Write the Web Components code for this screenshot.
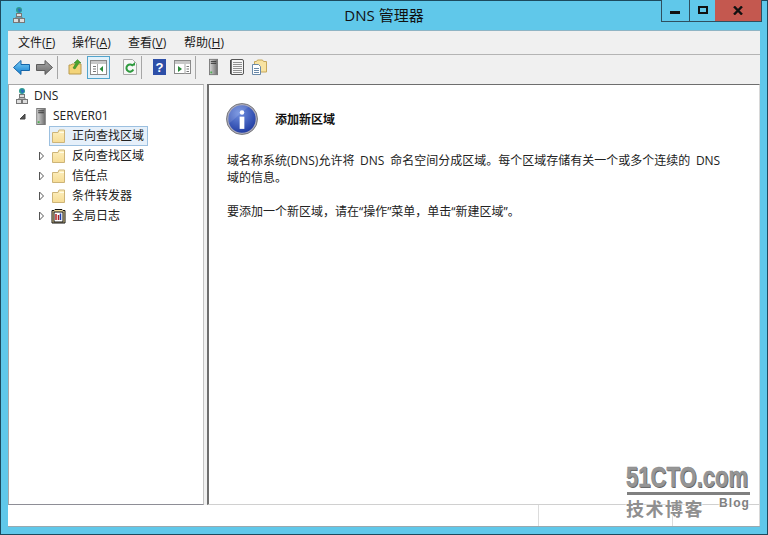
<!DOCTYPE html>
<html lang="zh-CN"><head><meta charset="utf-8"><title>DNS 管理器</title>
<style>
html,body{margin:0;height:100%;overflow:hidden}
body{font:12px "Open Sans","Noto Sans CJK SC",sans-serif;color:#1a1a1a}
</style></head><body>
<win-frame>
  <title-bar slot="title">DNS 管理器</title-bar>
  <menu-bar slot="menu"><span>文件(<u>F</u>)</span><span>操作(<u>A</u>)</span><span>查看(<u>V</u>)</span><span>帮助(<u>H</u>)</span></menu-bar>
  <tool-bar slot="tools"></tool-bar>
  <tree-pane slot="tree">
    <tree-row level="0" icon="dns">DNS</tree-row>
    <tree-row level="1" icon="server" twist="open">SERVER01</tree-row>
    <tree-row level="2" icon="folder" selected>正向查找区域</tree-row>
    <tree-row level="2" icon="folder" twist="closed">反向查找区域</tree-row>
    <tree-row level="2" icon="folder" twist="closed">信任点</tree-row>
    <tree-row level="2" icon="folder" twist="closed">条件转发器</tree-row>
    <tree-row level="2" icon="log" twist="closed">全局日志</tree-row>
  </tree-pane>
  <detail-pane slot="detail" heading="添加新区域">
    <p>域名称系统(DNS)允许将 DNS 命名空间分成区域。每个区域存储有关一个或多个连续的 DNS<br>域的信息。</p>
    <p>要添加一个新区域，请在“操作”菜单，单击“新建区域”。</p>
  </detail-pane>
  <status-bar slot="status"></status-bar>
  <blog-mark slot="mark"></blog-mark>
</win-frame>
<script>
const DEFS=`<svg width="0" height="0" style="position:absolute"><defs>
<linearGradient id="fold" x1="0" y1="0" x2="0" y2="1"><stop offset="0" stop-color="#fdf0c0"/><stop offset="1" stop-color="#f6dc95"/></linearGradient>
<linearGradient id="arrB" x1="0" y1="0" x2="0" y2="1"><stop offset="0" stop-color="#7fd0f5"/><stop offset="1" stop-color="#0f7ccf"/></linearGradient>
<linearGradient id="arrG" x1="0" y1="0" x2="0" y2="1"><stop offset="0" stop-color="#a8a8a8"/><stop offset="1" stop-color="#6a6a6a"/></linearGradient>
<linearGradient id="srv" x1="0" y1="0" x2="1" y2="0"><stop offset="0" stop-color="#d8d8d8"/><stop offset="1" stop-color="#6d6d6d"/></linearGradient>
<radialGradient id="info" cx=".4" cy=".3" r=".8"><stop offset="0" stop-color="#6f8fe0"/><stop offset="1" stop-color="#16319a"/></radialGradient>
<symbol id="folder" viewBox="0 0 16 16"><path d="M2.500 14.500V4.500h5.500l1-2.500h5.500v12.500z" fill="url(#fold)" stroke="#cdb478"/><path d="M9.500 4.500h4.500" stroke="#fffbe6"/></symbol>
<symbol id="dns" viewBox="0 0 12 16"><circle cx="6" cy="3" r="3" fill="#2f9d8f"/><path d="M4.500 1.500h2.500l1.500 2-2.500 2z" fill="#2a6fc0"/><path d="M6 6v1M3 11.500V10h6v1.500" fill="none" stroke="#777"/><rect x="3.500" y="6.500" width="5" height="3" fill="#ddd" stroke="#777"/><rect x=".5" y="11.500" width="5" height="4" fill="#ddd" stroke="#777"/><rect x="6.500" y="11.500" width="5" height="4" fill="#ddd" stroke="#777"/></symbol>
<symbol id="server" viewBox="0 0 10 18"><rect x=".5" y=".5" width="9" height="17" fill="url(#srv)" stroke="#777"/><path d="M2 3h6M2 5h6" stroke="#333"/><rect x="1.500" y="14" width="2" height="2" fill="#4caf50"/></symbol>
</defs></svg>`;
const def=(name,html,init)=>customElements.define(name,class extends HTMLElement{
  constructor(){super();this.attachShadow({mode:'open'}).innerHTML=DEFS+html}
  connectedCallback(){init&&init.call(this)}
});
def('win-frame',`<style>
:host{display:flex;flex-direction:column;box-sizing:border-box;width:768px;height:535px;position:relative;background:#60c8ea;border:1px solid #1c4a5e;padding:0 7px 7px 7px}
.main{flex:none;display:flex;flex-direction:column;box-sizing:border-box;height:497px;background:#f0f0f0;border-top:1px solid #8fb4c4;border-bottom:1px solid #98a9b0}
.panes{flex:none;display:flex;height:421px;gap:3px}
</style>
<slot name="title"></slot>
<div class="main"><slot name="menu"></slot><slot name="tools"></slot>
<div class="panes"><slot name="tree"></slot><slot name="detail"></slot></div>
<slot name="status"></slot></div><slot name="mark"></slot>`);
def('title-bar',`<style>
:host{display:flex;flex:none;height:29px;align-items:center;justify-content:center;position:relative;font-size:15px;color:#111}
.ic{position:absolute;left:5px;top:6px;width:12px;height:16px}
.t{margin-bottom:2px}
.btns{position:absolute;right:-2px;top:-1px;display:flex;height:22px;box-sizing:border-box;border:1px solid #2f4f5f;border-top:0;background:#60c8ea}
.b{width:27px;display:flex;align-items:center;justify-content:center;box-sizing:border-box;border-left:1px solid #2f4f5f}
.b:first-child{border-left:0}
.x{width:46px;background:#c4584f;border-left:0}
svg{display:block}
</style>
<svg class="ic"><use href="#dns"/></svg><span class="t"><slot></slot></span>
<div class="btns">
<div class="b"><svg width="11" height="10"><rect x="0" y="5" width="10" height="3" fill="#111"/></svg></div>
<div class="b" style="width:26px"><svg width="10" height="9"><rect x="1" y="1" width="8" height="6" fill="none" stroke="#111" stroke-width="2"/></svg></div>
<div class="b x"><svg width="10" height="9" viewBox="0 0 10 9"><path d="M1 .5 9 8.500M9 .5 1 8.500" stroke="#111" stroke-width="2.400"/></svg></div>
</div>`);
def('menu-bar',`<style>
:host{display:flex;flex:none;height:22px;padding:1px 0 0 10px;align-items:center;gap:17px;border-bottom:1px solid #b4b4b4;background:#f0f0f0;font-size:12px;line-height:22px}
::slotted(span){width:39px;white-space:nowrap}
::slotted(span:first-child){margin-right:-2px}
</style><slot></slot>`);
const ti={
back:`<svg width="17" height="15" viewBox="0 0 17 15"><path d="M.5 7.500 8 .5v4h8.500v6H8v4z" fill="url(#arrB)" stroke="#1565a8"/></svg>`,
fwd:`<svg width="17" height="15" viewBox="0 0 17 15"><path d="M16.500 7.500 9 .5v4H.5v6H9v4z" fill="url(#arrG)" stroke="#5c5c5c"/></svg>`,
up:`<svg width="16" height="16" viewBox="0 0 16 16"><path d="M1 15V6h2l1-1h9v10z" fill="#f3d479" stroke="#b99a4e"/><path d="M5 9 8 4H6l3.500-3.500L13 4h-2L7 10z" fill="#4aa52e" stroke="#2d7a1c" stroke-width=".5"/></svg>`,
tree:`<svg width="17" height="15" viewBox="0 0 17 15"><rect x=".5" y=".5" width="16" height="14" fill="#fff" stroke="#8a8a8a"/><rect x="1" y="1" width="15" height="3" fill="#c8c8c8"/><path d="M3 6h3v1H3zM3 8.500h3v1H3zM3 11h3v1H3z" fill="#777"/><path d="M7.500 4v10" stroke="#aaa"/><path d="M13 6v6L9.500 9z" fill="#2a8a3a"/></svg>`,
refresh:`<svg width="14" height="16" viewBox="0 0 14 16"><path d="M.5.5h9l4 4v11H.5z" fill="#f7f7f7" stroke="#aaa"/><path d="M10 7a3.600 3.600 0 1 0 .3 3.500" fill="none" stroke="#2e9a3e" stroke-width="2"/><path d="M8 6.500h4V3z" fill="#2e9a3e"/></svg>`,
help:`<svg width="13" height="16" viewBox="0 0 13 16"><rect width="13" height="16" fill="#2d4fa8"/><text x="6.500" y="13" text-anchor="middle" font-family="Liberation Sans" font-weight="700" font-size="13" fill="#fff">?</text></svg>`,
panel:`<svg width="17" height="14" viewBox="0 0 17 14"><rect x=".5" y=".5" width="16" height="13" fill="#fff" stroke="#8a8a8a"/><rect x="1" y="1" width="15" height="3" fill="#c8c8c8"/><path d="M11 4v10" stroke="#aaa"/><path d="M12.500 6h2.500v1h-2.500zM12.500 8.500h2.500v1h-2.500zM12.500 11h2.500v1h-2.500z" fill="#777"/><path d="M4 6v6l4-3z" fill="#2a8a3a"/></svg>`,
server:`<svg width="9" height="18"><use href="#server"/></svg>`,
list:`<svg width="14" height="16" viewBox="0 0 14 16"><rect x=".5" y=".5" width="13" height="15" rx="1.500" fill="#f6f6f6" stroke="#555"/><path d="M1 1v14" stroke="#444" stroke-width="1.500"/><path d="M3 3.500h9M3 5.500h9M3 7.500h9M3 9.500h9M3 11.500h9M3 13.500h9" stroke="#777" stroke-width=".8"/></svg>`,
exp:`<svg width="15" height="16" viewBox="0 0 15 16"><path d="M2.500 13V2.500h2l1-1.500h5l1 1.500h3V13z" fill="#f8e3a1" stroke="#c6a75a"/><path d="M.5 5.500h6l2 2v8h-8z" fill="#fff" stroke="#6a89a8"/><path d="M2 9.500h5M2 11.500h5M2 13.500h5" stroke="#6a89a8"/></svg>`};
def('tool-bar',`<style>
:host{display:flex;flex:none;height:29px;align-items:center;padding:0 0 5px 2px;background:#f0f0f0;box-sizing:border-box}
.b{flex:none;width:23px;height:23px;display:flex;align-items:center;justify-content:center;box-sizing:border-box}
.a{background:#e2f1fa;border:1px solid #52a4cc}
.s{flex:none;width:1px;height:23px;background:#a6a6a6;margin:0 6px 0 1px}
svg{display:block}
</style>
<div class="b">${ti.back}</div><div class="b">${ti.fwd}</div><div class="s"></div>
<div class="b">${ti.up}</div><div class="b a">${ti.tree}</div><div class="b" style="margin-left:8px">${ti.refresh}</div><div class="s" style="margin-left:0"></div>
<div class="b">${ti.help}</div><div class="b">${ti.panel}</div><div class="s"></div>
<div class="b">${ti.server}</div><div class="b">${ti.list}</div><div class="b">${ti.exp}</div>`);
def('tree-pane',`<style>
:host{display:block;flex:none;width:196px;height:421px;box-sizing:border-box;background:#fff;border:1px solid #a8a8a8;border-right-color:#c4c4c4;border-bottom-color:#8e8e96;padding-top:1px}
</style><slot></slot>`);
def('tree-row',`<style>
:host{display:flex;height:20px;align-items:center;white-space:nowrap;box-sizing:border-box;color:#222}
.tw{flex:none;width:11px;height:10px;display:flex;align-items:center;justify-content:flex-start}
.ic{flex:none;width:16px;height:16px;display:flex;align-items:center;justify-content:center}
.lb{line-height:18px;padding:0 3px 0 6px}
.wrap{display:flex;align-items:center;height:20px;box-sizing:border-box;border:1px solid transparent}
:host([selected]) .wrap{border-color:#9cc0e0;background:#e6f0fa}
svg{display:block}
</style>
<div id="ind" style="flex:none"></div><div class="tw" id="tw"></div><div class="wrap" id="w"><div class="ic" id="ic"></div><span class="lb"><slot></slot></span></div>`,
function(){
 const s=this.shadowRoot,l=+this.getAttribute('level'),ic=this.getAttribute('icon'),tw=this.getAttribute('twist');
 s.getElementById('ind').style.width=[2,10,29][l]+'px';
 const t=s.getElementById('tw');
 t.style.visibility=tw?'visible':'hidden';
 if(l===0)t.style.width='0';
 if(tw==='closed')t.innerHTML='<svg width="7" height="10"><path d="M1.500 1 5.500 5 1.500 9z" fill="#fff" stroke="#555"/></svg>';
 if(tw==='open')t.innerHTML='<svg width="7" height="7"><path d="M6 1V6H1z" fill="#555" stroke="#444"/></svg>';
 s.getElementById('ic').innerHTML={
  dns:'<svg width="12" height="16" style="margin-left:3px"><use href="#dns"/></svg>',
  server:'<svg width="10" height="17" style="margin-left:4px"><use href="#server"/></svg>',
  folder:'<svg width="16" height="16"><use href="#folder"/></svg>',
  log:'<svg width="15" height="15" viewBox="0 0 15 15"><path d="M1 14V1.500h2l1-1h7l1 1h2V14z" fill="#f3df9f" stroke="#111"/><rect x="3" y="3" width="9" height="10" fill="#fff" stroke="#111"/><path d="M5 5v6M7.500 6v5" stroke="#b02020" stroke-width="1.500"/><path d="M9.500 4.500v6.500" stroke="#2040b0" stroke-width="1.500"/></svg>'}[ic];
});
def('detail-pane',`<style>
:host{display:block;flex:none;width:553px;height:421px;box-sizing:border-box;background:#fff;border-left:2px solid #6e6e6e;border-top:1px solid #6e6e6e;border-bottom:1px solid #d0d0d0;border-right:1px solid #d8d8d8;padding:18px 0 0 18px;color:#222}
.h{display:flex;align-items:center;gap:17px;height:32px;margin-left:-1px}
.h svg{display:block;flex:none}
b{font-size:12px;font-weight:700;color:#111}
.body{margin-top:17px;line-height:17px;word-spacing:2.6px}
::slotted(p){margin:0 0 17px;white-space:nowrap}
</style>
<div class="h"><svg width="32" height="32" viewBox="0 0 34 34"><circle cx="17" cy="17" r="15.500" fill="url(#info)" stroke="#aab" stroke-width="2"/><circle cx="17" cy="17" r="16.500" fill="none" stroke="#555" stroke-width=".7"/><path d="M3 22 24 4a15 15 0 0 0-21 18z" fill="#fff" opacity=".12"/><circle cx="17" cy="10" r="2.400" fill="#fff"/><path d="M14.500 14.500h5v13h-5z" fill="#fff"/></svg><b id="t"></b></div>
<div class="body"><slot></slot></div>`,function(){this.shadowRoot.getElementById('t').textContent=this.getAttribute('heading')});
def('status-bar',`<style>
:host{display:flex;flex:none;height:21px;background:#fff;box-sizing:border-box}
div{height:100%;box-sizing:border-box}
.a{flex:1}.b{width:134px;border-left:1px solid #dcdcdc}.c{width:88px;border-left:1px solid #dcdcdc;border-right:1px solid #d8d8d8}
</style><div class="a"></div><div class="b"></div><div class="c"></div>`);
def('blog-mark',`<style>
:host{display:block;position:absolute;left:625px;top:462px;width:126px;height:58px;color:#969696;font-family:"Liberation Sans","Noto Sans CJK SC",sans-serif;font-weight:700;white-space:nowrap}
.big{position:absolute;left:0;top:0;font-size:30px;line-height:28px;transform-origin:0 0;transform:scaleX(.735);text-shadow:1px 1px 0 #5f5f5f;-webkit-text-stroke:.6px #8a8a8a}
.rule{position:absolute;left:1px;top:29px;width:123px;height:3px;background:#808080}
.cn{position:absolute;left:0;top:34.500px;font:700 18px/20px "Noto Sans CJK SC",sans-serif;letter-spacing:1.5px;color:#8f8f8f;text-shadow:0 0 2px #fff,0 0 2px #fff,0 0 2px #fff}
.en{position:absolute;right:2px;top:34px;font-size:12px;line-height:13px;letter-spacing:1.1px;color:#808080;text-shadow:0 0 2px #fff,0 0 2px #fff}
</style><div class="big">51CTO.com</div><div class="rule"></div><div class="cn">技术博客</div><div class="en">Blog</div>`);
</script>
</body></html>
